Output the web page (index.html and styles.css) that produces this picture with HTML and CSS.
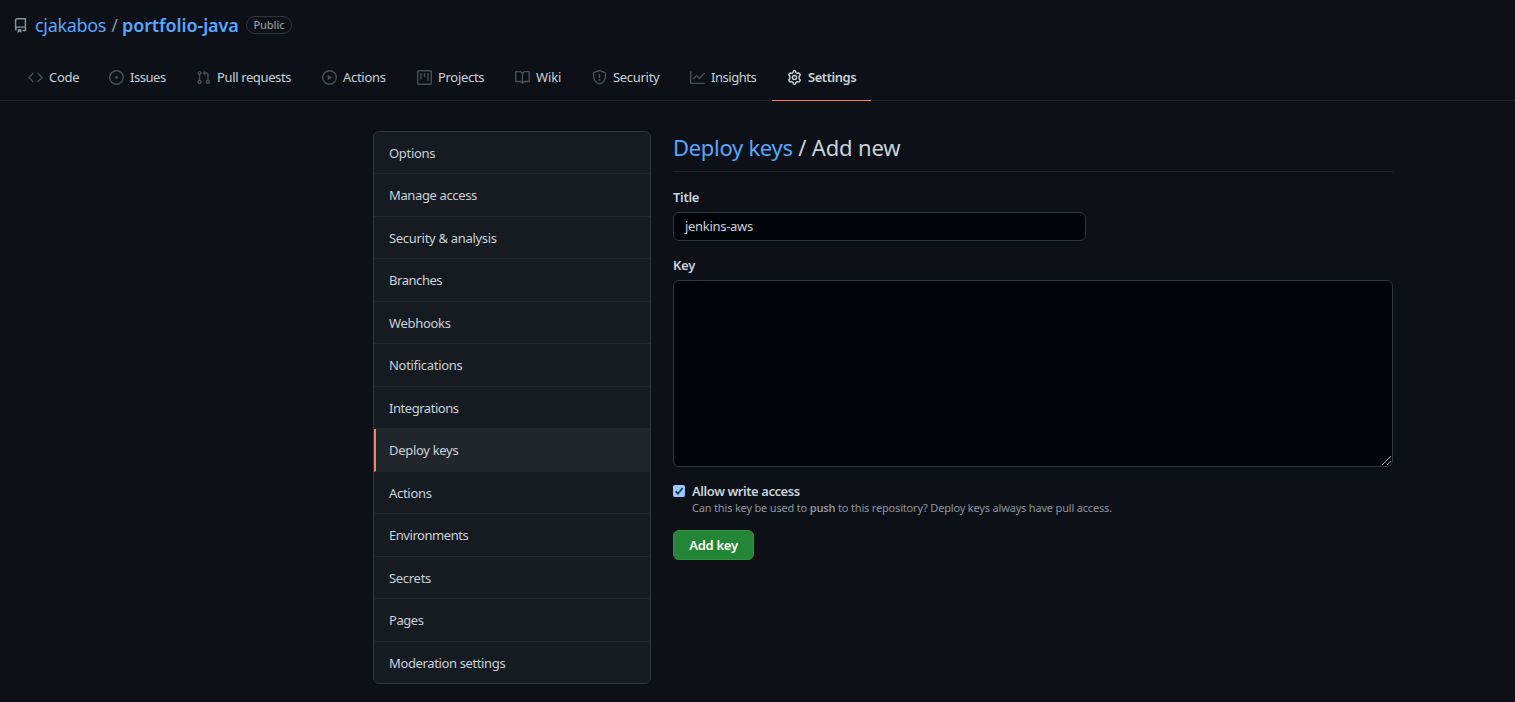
FILE: index.html
```html
<!DOCTYPE html>
<html lang="en">
<head>
<meta charset="utf-8">
<title>Deploy keys</title>
<link rel="stylesheet" href="styles.css">
</head>
<body>
<header class="repo-header">
  <div class="repo-title">
    <svg class="icon repo-icon" viewBox="0 0 16 16"><path fill-rule="evenodd" d="M2 2.5A2.5 2.5 0 0 1 4.5 0h8.75a.75.75 0 0 1 .75.75v12.5a.75.75 0 0 1-.75.75h-2.5a.75.75 0 1 1 0-1.5h1.75v-2h-8a1 1 0 0 0-.714 1.7.75.75 0 0 1-1.072 1.05A2.495 2.495 0 0 1 2 11.5v-9zm10.5-1V9h-8c-.356 0-.694.074-1 .208V2.5a1 1 0 0 1 1-1h8zM5 12.25v3.25a.25.25 0 0 0 .4.2l1.45-1.087a.25.25 0 0 1 .3 0L8.6 15.7a.25.25 0 0 0 .4-.2v-3.25a.25.25 0 0 0-.25-.25h-3.5a.25.25 0 0 0-.25.25z"/></svg>
    <a class="owner">cjakabos</a><span class="slash">/</span><a class="repo">portfolio-java</a>
    <span class="badge">Public</span>
  </div>
  <nav class="tabs">
    <a class="tab"><svg class="icon" viewBox="0 0 16 16"><path d="M4.72 3.22a.75.75 0 0 1 1.06 1.06L2.06 8l3.72 3.72a.75.75 0 1 1-1.06 1.06L.47 8.53a.75.75 0 0 1 0-1.06l4.25-4.25zm6.56 0a.75.75 0 1 0-1.06 1.06L13.94 8l-3.72 3.72a.75.75 0 1 0 1.06 1.06l4.25-4.25a.75.75 0 0 0 0-1.06l-4.25-4.25z"/></svg><span>Code</span></a>
    <a class="tab"><svg class="icon" viewBox="0 0 16 16"><path d="M8 9.5a1.5 1.5 0 1 0 0-3 1.5 1.5 0 0 0 0 3z"/><path fill-rule="evenodd" d="M8 0a8 8 0 1 0 0 16A8 8 0 0 0 8 0zM1.5 8a6.5 6.5 0 1 1 13 0 6.5 6.5 0 0 1-13 0z"/></svg><span class="tight">Issues</span></a>
    <a class="tab pulls"><svg class="icon" viewBox="0 0 16 16"><path fill-rule="evenodd" d="M7.177 3.073L9.573.677A.25.25 0 0 1 10 .854v4.792a.25.25 0 0 1-.427.177L7.177 3.427a.25.25 0 0 1 0-.354zM3.75 2.5a.75.75 0 1 0 0 1.5.75.75 0 0 0 0-1.5zm-2.25.75a2.25 2.25 0 1 1 3 2.122v5.256a2.251 2.251 0 1 1-1.5 0V5.372A2.25 2.25 0 0 1 1.5 3.25zM11 2.5h-1V4h1a1 1 0 0 1 1 1v5.628a2.251 2.251 0 1 0 1.5 0V5A2.5 2.5 0 0 0 11 2.5zm1 10.25a.75.75 0 1 1 1.5 0 .75.75 0 0 1-1.5 0zM3.75 12a.75.75 0 1 0 0 1.5.75.75 0 0 0 0-1.5z"/></svg><span>Pull requests</span></a>
    <a class="tab"><svg class="icon" viewBox="0 0 16 16"><path fill-rule="evenodd" d="M1.5 8a6.5 6.5 0 1 1 13 0 6.5 6.5 0 0 1-13 0zM8 0a8 8 0 1 0 0 16A8 8 0 0 0 8 0zM6.379 5.227A.25.25 0 0 0 6 5.442v5.117a.25.25 0 0 0 .379.214l4.264-2.559a.25.25 0 0 0 0-.428L6.379 5.227z"/></svg><span>Actions</span></a>
    <a class="tab"><svg class="icon" viewBox="0 0 16 16"><path fill-rule="evenodd" d="M1.75 0A1.75 1.75 0 0 0 0 1.75v12.5C0 15.216.784 16 1.75 16h12.5A1.75 1.75 0 0 0 16 14.25V1.75A1.75 1.75 0 0 0 14.25 0H1.75zM1.5 1.75a.25.25 0 0 1 .25-.25h12.5a.25.25 0 0 1 .25.25v12.5a.25.25 0 0 1-.25.25H1.75a.25.25 0 0 1-.25-.25V1.75zM11.75 3a.75.75 0 0 0-.75.75v7.5a.75.75 0 0 0 1.5 0v-7.5a.75.75 0 0 0-.75-.75zm-8.25.75a.75.75 0 0 1 1.5 0v5.5a.75.75 0 0 1-1.5 0v-5.5zM8 3a.75.75 0 0 0-.75.75v3.5a.75.75 0 0 0 1.5 0v-3.5A.75.75 0 0 0 8 3z"/></svg><span>Projects</span></a>
    <a class="tab"><svg class="icon" viewBox="0 0 16 16"><path fill-rule="evenodd" d="M0 1.75A.75.75 0 0 1 .75 1h4.253c1.227 0 2.317.59 3 1.501A3.744 3.744 0 0 1 11.006 1h4.245a.75.75 0 0 1 .75.75v10.5a.75.75 0 0 1-.75.75h-4.507a2.25 2.25 0 0 0-1.591.659l-.622.621a.75.75 0 0 1-1.06 0l-.622-.621A2.25 2.25 0 0 0 5.258 13H.75a.75.75 0 0 1-.75-.75V1.75zm8.755 3a2.25 2.25 0 0 1 2.25-2.25H14.5v9h-3.757c-.71 0-1.4.201-1.992.572l.004-7.322zm-1.504 7.324l.004-5.073-.002-2.253A2.25 2.25 0 0 0 5.003 2.5H1.5v9h3.757a3.75 3.75 0 0 1 1.994.574z"/></svg><span class="loose">Wiki</span></a>
    <a class="tab security"><svg class="icon" viewBox="0 0 16 16"><path fill-rule="evenodd" d="M7.467.133a1.75 1.75 0 0 1 1.066 0l5.25 1.68A1.75 1.75 0 0 1 15 3.48V7c0 1.566-.32 3.182-1.303 4.682-.983 1.498-2.585 2.813-5.032 3.855a1.7 1.7 0 0 1-1.33 0c-2.447-1.042-4.049-2.357-5.032-3.855C1.32 10.182 1 8.566 1 7V3.48a1.75 1.75 0 0 1 1.217-1.667l5.25-1.68zm.61 1.429a.25.25 0 0 0-.153 0l-5.25 1.68a.25.25 0 0 0-.174.238V7c0 1.358.275 2.666 1.057 3.86.784 1.194 2.121 2.34 4.366 3.297a.2.2 0 0 0 .154 0c2.245-.956 3.582-2.104 4.366-3.298C13.225 9.666 13.5 8.36 13.5 7V3.48a.25.25 0 0 0-.174-.237l-5.25-1.68zM9 10.5a1 1 0 1 1-2 0 1 1 0 0 1 2 0zm-.25-5.75a.75.75 0 1 0-1.5 0v3a.75.75 0 0 0 1.5 0v-3z"/></svg><span>Security</span></a>
    <a class="tab"><svg class="icon" viewBox="0 0 16 16"><path fill-rule="evenodd" d="M1.5 1.75a.75.75 0 0 0-1.5 0v12.5c0 .414.336.75.75.75h14.5a.75.75 0 0 0 0-1.5H1.5V1.75zm14.28 2.53a.75.75 0 0 0-1.06-1.06L10 7.94 7.53 5.47a.75.75 0 0 0-1.06 0L3.22 8.72a.75.75 0 0 0 1.06 1.06L7 7.06l2.47 2.47a.75.75 0 0 0 1.06 0l5.25-5.25z"/></svg><span class="tight">Insights</span></a>
    <a class="tab selected"><svg class="icon" viewBox="0 0 16 16"><path class="gear" d="M6.9 1.1Q8 .6 9.1 1.1L9.55 2.9L10.9 3.65L12.7 3.15Q13.9 4 14.2 5.3L12.9 6.7V9.3L14.2 10.7Q13.9 12 12.7 12.85L10.9 12.35L9.55 13.1L9.1 14.9Q8 15.4 6.9 14.9L6.45 13.1L5.1 12.35L3.3 12.85Q2.1 12 1.8 10.7L3.1 9.3V6.7L1.8 5.3Q2.1 4 3.3 3.15L5.1 3.65L6.45 2.9Z"/><circle class="gear" cx="8" cy="8" r="2.2"/></svg><span class="tight">Settings</span></a>
  </nav>
</header>
<main class="content">
  <nav class="menu">
    <a class="item">Options</a>
    <a class="item snug">Manage access</a>
    <a class="item">Security &amp; analysis</a>
    <a class="item tight">Branches</a>
    <a class="item">Webhooks</a>
    <a class="item">Notifications</a>
    <a class="item tight">Integrations</a>
    <a class="item current">Deploy keys</a>
    <a class="item">Actions</a>
    <a class="item tight">Environments</a>
    <a class="item">Secrets</a>
    <a class="item tight">Pages</a>
    <a class="item snug">Moderation settings</a>
  </nav>
  <section class="panel">
    <h1 class="heading"><a class="link">Deploy keys</a> / Add new</h1>
    <label class="label title-label">Title</label>
    <div class="input">jenkins-aws</div>
    <label class="label key-label">Key</label>
    <div class="textarea"><svg class="grip" viewBox="0 0 11 11"><path d="M1 10L10 1M6 10L10 6"/></svg></div>
    <div class="check-row">
      <svg class="checkbox" viewBox="0 0 12 12"><rect width="12" height="12" rx="2"/><path d="M2.5 6.2L4.9 8.7L9.6 3"/></svg>
      <div class="check-text">
        <div class="check-label">Allow write access</div>
        <div class="note">Can this key be used to <b>push</b> to this repository? Deploy keys always have pull access.</div>
      </div>
    </div>
    <button class="button">Add key</button>
  </section>
</main>
</body>
</html>
```
FILE: styles.css
```css
* { box-sizing: border-box; }
body {
  margin: 0;
  height: 702px;
  overflow: hidden;
  background: #0d1117;
  color: #c9d1d9;
  font: 13px/20px "Noto Sans", "Open Sans", sans-serif;
  letter-spacing: -0.3px;
}
.icon { width: 15px; height: 15px; flex: none; fill: #484f58; }
.repo-header { height: 101px; border-bottom: 1px solid #21262d; }
.repo-title {
  display: flex;
  align-items: center;
  height: 55px;
  padding: 0 0 6px 13px;
  font-size: 18px;
  line-height: 28px;
}
.repo-icon { fill: #8b949e; margin: 2px 7px 0 0; }
.owner, .repo, .link { color: #58a6ff; }
.owner { width: 72px; letter-spacing: -0.32px; }
.slash { width: 15px; text-align: center; color: #8b949e; }
.repo { width: 117px; font-weight: 600; letter-spacing: -0.12px; }
.badge {
  margin-left: 7px;
  width: 46px;
  height: 18px;
  border: 1px solid #30363d;
  border-radius: 9px;
  color: #8b949e;
  font-size: 11px;
  font-weight: 500;
  line-height: 16px;
  text-align: center;
  letter-spacing: -0.1px;
}
.tabs {
  display: grid;
  grid-template-columns: 81px 88px 125px 95px 98px 78px 97px 97px 99px;
  padding-left: 13px;
  height: 46px;
}
.tab {
  display: flex;
  align-items: center;
  gap: 6px;
  padding: 0 0 1px 15px;
  white-space: nowrap;
}
.tab span { margin-top: -2px; }
.pulls, .security { padding-left: 14px; }
.pulls { letter-spacing: -0.37px; }
.tight { letter-spacing: -0.45px; }
.snug { letter-spacing: -0.37px; }
.loose { letter-spacing: -0.1px; }
.selected { border-bottom: 1px solid #f78166; padding-bottom: 0; font-weight: 600; }
.gear { fill: none; stroke: #c9d1d9; stroke-width: 1.5; stroke-linejoin: round; }
.content { display: flex; gap: 22px; padding: 30px 0 0 373px; }
.menu {
  display: grid;
  grid-template-rows: 42px;
  grid-auto-rows: 42.5px;
  width: 278px;
  height: 553px;
  border: 1px solid #30363d;
  border-radius: 6px;
  background: #161b22;
  overflow: hidden;
}
.item {
  display: flex;
  align-items: center;
  padding: 1px 0 0 15px;
  border-bottom: 1px solid #21262d;
  white-space: nowrap;
}
.item:last-child { border-bottom: 0; }
.current { background: #21262d; border-left: 2px solid #f78166; padding-left: 13px; }
.panel { width: 720px; }
.heading {
  margin: 0;
  height: 41px;
  border-bottom: 1px solid #21262d;
  font-size: 22px;
  font-weight: 400;
  line-height: 32px;
  letter-spacing: -0.16px;
}
.link { letter-spacing: -0.3px; }
.label { display: block; height: 20px; font-weight: 600; }
.title-label { margin: 15px 0 5px; }
.input {
  width: 413px;
  height: 29px;
  padding: 0 11px;
  border: 1px solid #30363d;
  border-radius: 6px;
  background: #010409;
  line-height: 27px;
}
.key-label { margin: 14px 0 5px; }
.textarea {
  display: flex;
  align-items: flex-end;
  justify-content: flex-end;
  height: 187px;
  border: 1px solid #30363d;
  border-radius: 6px;
  background: #010409;
}
.grip { width: 11px; height: 11px; fill: none; stroke: #c9d1d9; stroke-width: 0.8; }
.check-row { display: flex; gap: 7px; margin-top: 15px; }
.checkbox { width: 12px; height: 12px; margin-top: 3px; fill: #99c8ff; }
.checkbox path { fill: none; stroke: #20344d; stroke-width: 1.7; }
.check-label { height: 18px; font-weight: 600; line-height: 19px; letter-spacing: -0.43px; }
.note { height: 16px; color: #8b949e; font-size: 11px; line-height: 16px; white-space: nowrap; letter-spacing: -0.18px; }
.note b { font-weight: 600; }
.button {
  display: block;
  width: 81px;
  height: 30px;
  margin-top: 14px;
  padding: 0;
  border: 1px solid #359344;
  border-radius: 6px;
  background: #238636;
  color: #fff;
  font: 600 13px/28px "Noto Sans", sans-serif;
  letter-spacing: -0.3px;
}
```
